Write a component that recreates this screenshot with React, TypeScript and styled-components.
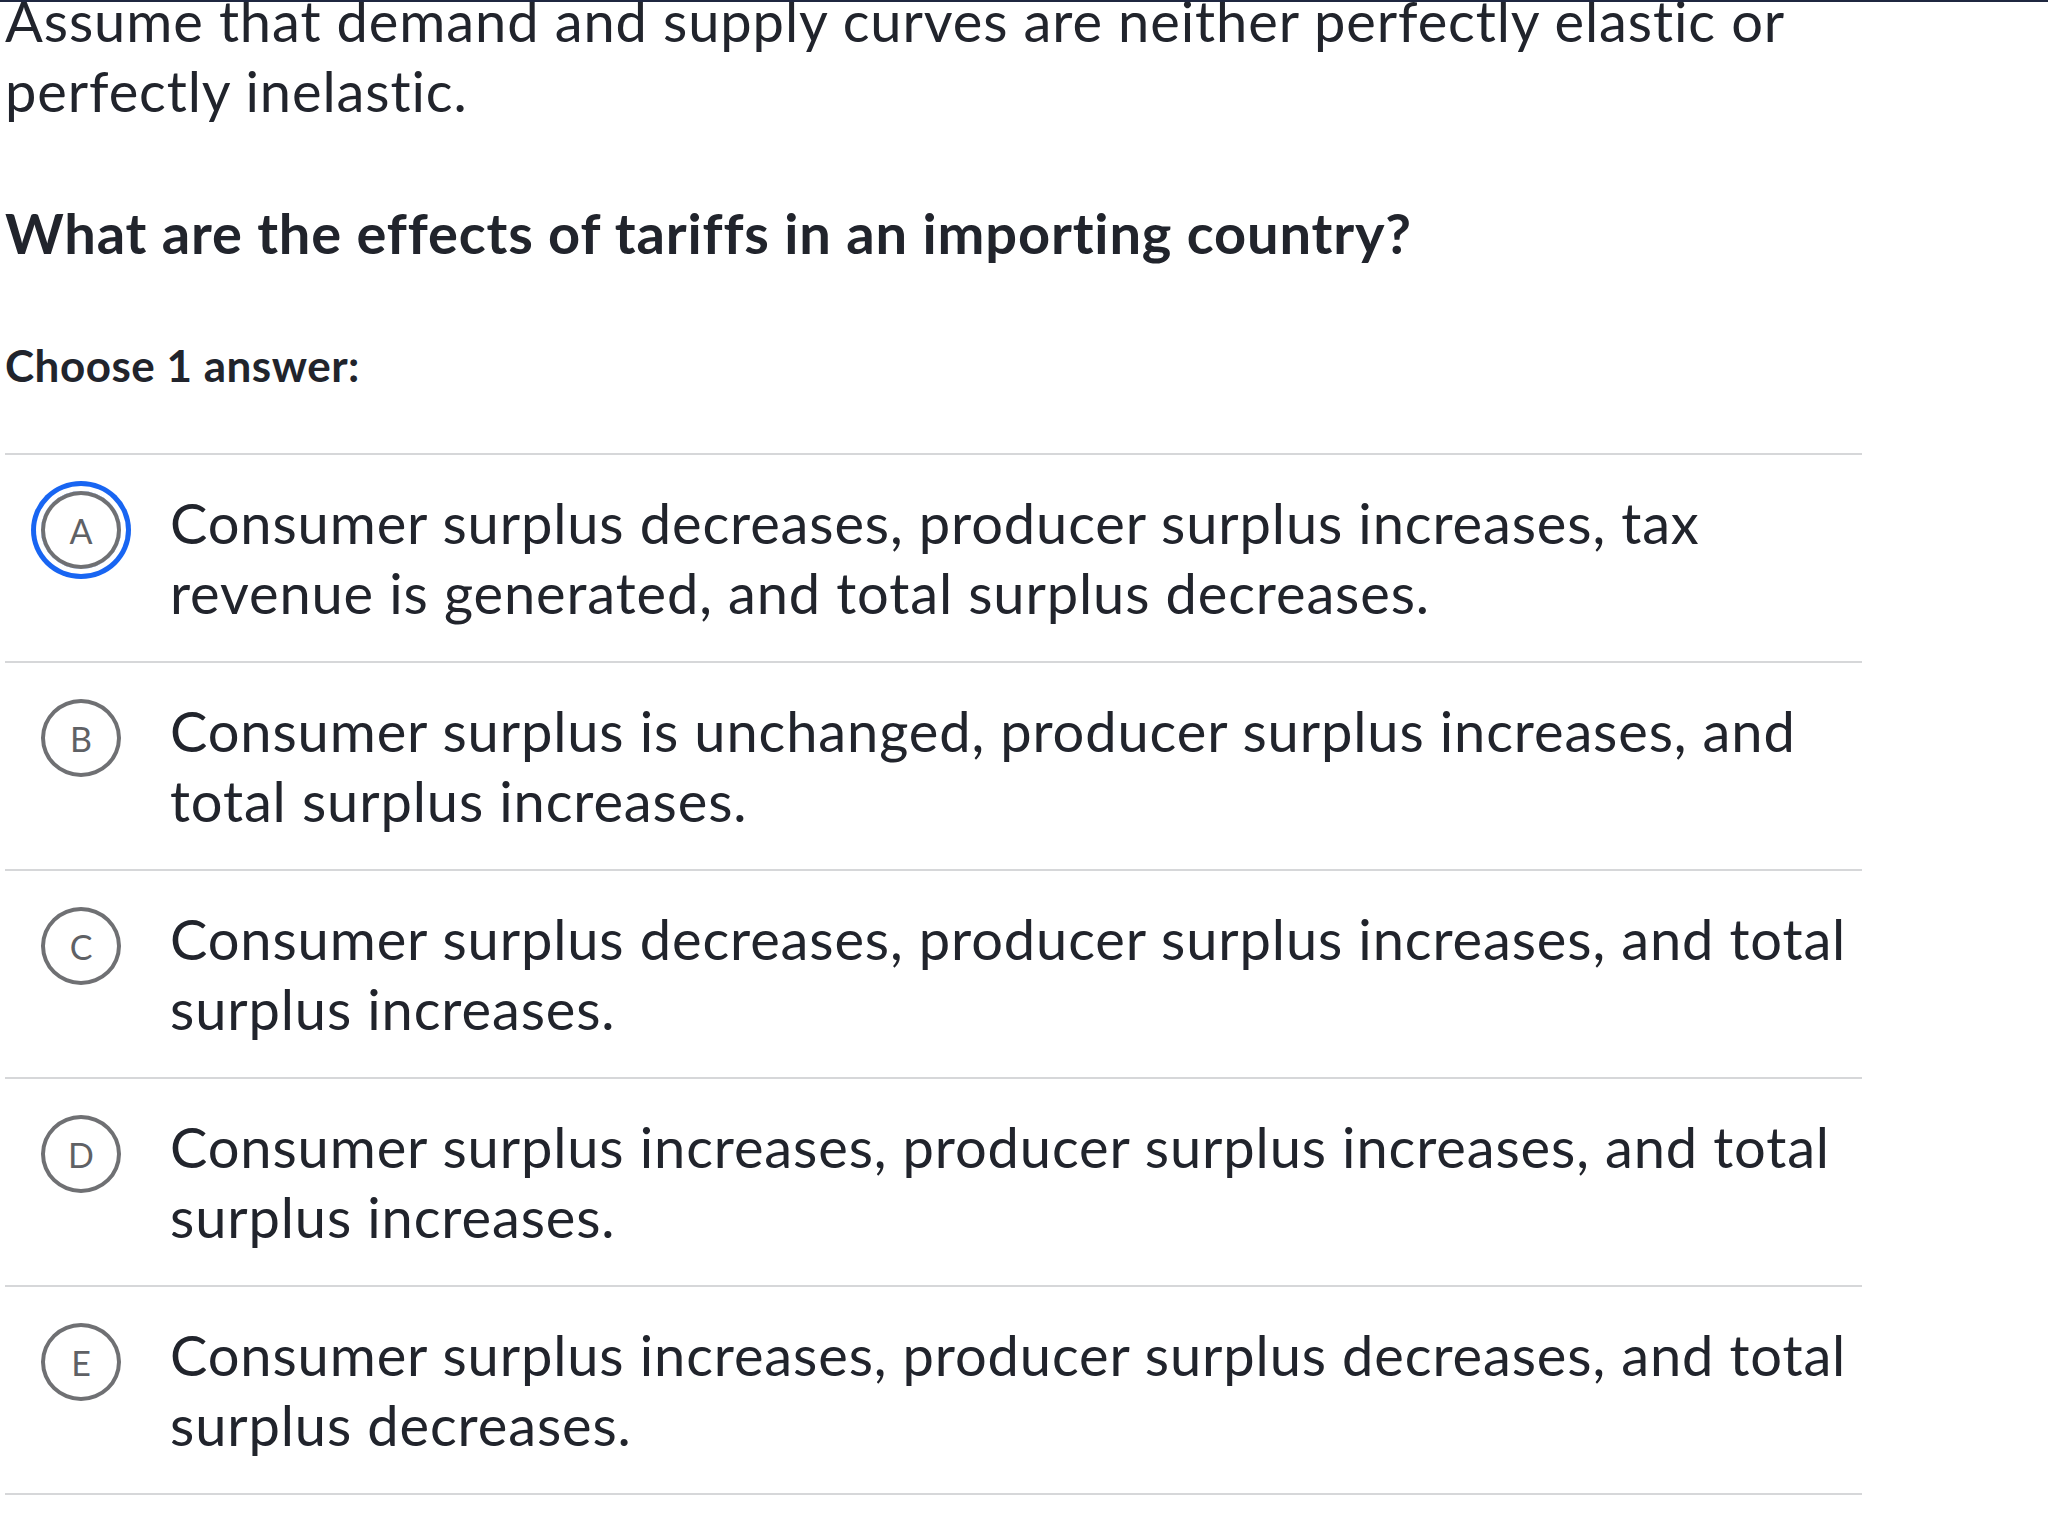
import React from "react";
import styled, { createGlobalStyle } from "styled-components";

const GlobalStyle = createGlobalStyle`
  html, body {
    margin: 0;
    padding: 0;
    background: #ffffff;
  }
  body {
    font-family: Lato, "Noto Sans", "Liberation Sans", sans-serif;
    color: #21242c;
    overflow: hidden;
    -webkit-font-smoothing: antialiased;
  }
`;

const TopRule = styled.div`
  height: 2px;
  background: #1f2740;
  position: relative;
  z-index: 1;
`;

const Page = styled.main`
  width: 1857px;
  padding-left: 5px;
  display: flex;
  flex-direction: column;
`;

const Prompt = styled.p`
  margin: -16px 0 0;
  font-size: 56px;
  line-height: 70px;
  letter-spacing: 0.9px;
  font-weight: 400;
`;

const Question = styled.h2`
  margin: 72px 0 0;
  font-size: 56px;
  line-height: 70px;
  letter-spacing: 0.85px;
  font-weight: 700;
`;

const Instruction = styled.div`
  margin: 68px 0 0;
  font-size: 44px;
  line-height: 58px;
  letter-spacing: 0.5px;
  font-weight: 700;
`;

const ChoiceList = styled.ul`
  list-style: none;
  margin: 59px 0 0;
  padding: 0;
  border-bottom: 2px solid #d6d7d9;
`;

const ChoiceRow = styled.li`
  display: flex;
  align-items: flex-start;
  gap: 49px;
  padding: 33px 8px 33px 36px;
  border-top: 2px solid #d6d7d9;
`;

const Bubble = styled.span<{ $selected?: boolean }>`
  flex: none;
  box-sizing: border-box;
  width: 80px;
  height: 78px;
  margin-top: 3px;
  border: 4px solid #6f7073;
  border-radius: 50%;
  display: flex;
  align-items: center;
  justify-content: center;
  font-size: 34px;
  font-weight: 400;
  color: #5f6165;
  box-shadow: ${(p) =>
    p.$selected ? "0 0 0 5px #ffffff, 0 0 0 10px #1865f2" : "none"};
`;

const ChoiceText = styled.span`
  flex: 1;
  font-size: 56px;
  line-height: 70px;
  letter-spacing: 0.88px;
  font-weight: 400;
`;

const choices = [
  {
    letter: "A",
    text: "Consumer surplus decreases, producer surplus increases, tax revenue is generated, and total surplus decreases.",
    selected: true,
  },
  {
    letter: "B",
    text: "Consumer surplus is unchanged, producer surplus increases, and total surplus increases.",
  },
  {
    letter: "C",
    text: "Consumer surplus decreases, producer surplus increases, and total surplus increases.",
  },
  {
    letter: "D",
    text: "Consumer surplus increases, producer surplus increases, and total surplus increases.",
  },
  {
    letter: "E",
    text: "Consumer surplus increases, producer surplus decreases, and total surplus decreases.",
  },
];

export default function App() {
  return (
    <>
      <GlobalStyle />
      <TopRule />
      <Page>
        <Prompt>
          Assume that demand and supply curves are neither perfectly elastic or
          perfectly inelastic.
        </Prompt>
        <Question>What are the effects of tariffs in an importing country?</Question>
        <Instruction>Choose 1 answer:</Instruction>
        <ChoiceList>
          {choices.map((c) => (
            <ChoiceRow key={c.letter}>
              <Bubble $selected={c.selected}>{c.letter}</Bubble>
              <ChoiceText>{c.text}</ChoiceText>
            </ChoiceRow>
          ))}
        </ChoiceList>
      </Page>
    </>
  );
}
